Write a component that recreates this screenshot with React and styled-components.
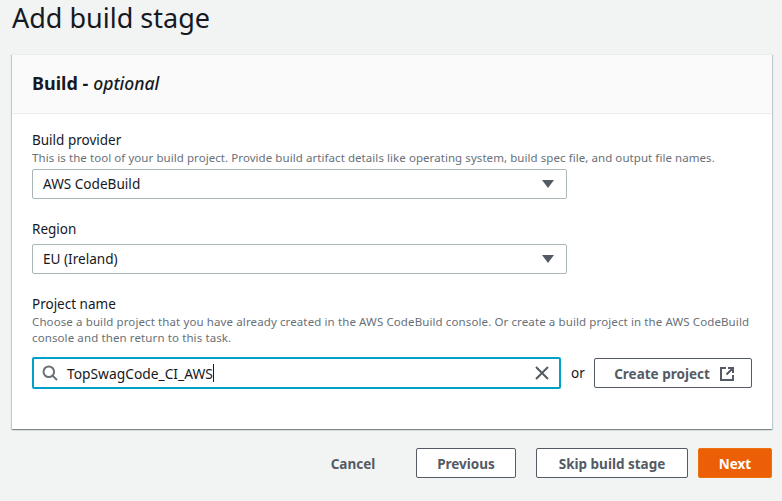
import React from "react";
import styled, { createGlobalStyle } from "styled-components";

const Global = createGlobalStyle`
  html, body { margin: 0; padding: 0; background: #f2f3f3; }
  body { font-family: "Noto Sans", "Open Sans", sans-serif; color: #16191f; }
`;
const Page = styled.div`
  width: 782px; height: 501px; overflow: hidden; box-sizing: border-box;
  padding: 0 10px 0 12px; display: flex; flex-direction: column;
`;
const Title = styled.h1`
  margin: 0; height: 54px; font-size: 27px; line-height: 36px; font-weight: 400; color: #16191f;
`;
const Card = styled.section`
  height: 375px; background: #fff; display: flex; flex-direction: column;
  box-shadow: 0 1px 1px 0 rgba(0,28,36,.3), 1px 1px 1px 0 rgba(0,28,36,.15), -1px 1px 1px 0 rgba(0,28,36,.15);
  border-top: 1px solid #eaeded; box-sizing: border-box;
`;
const CardHeader = styled.header`
  height: 59px; box-sizing: border-box; background: #fafafa; border-bottom: 1px solid #eaeded;
  padding: 0 20px 2px; display: flex; align-items: center;
  font-size: 18px; font-weight: 700; line-height: 24px;
  em { font-weight: 500; font-size: 17.5px; margin-left: 5px; }
`;
const CardBody = styled.div`
  padding: 16px 20px 0; display: flex; flex-direction: column; gap: 20px;
`;
const Field = styled.div` display: flex; flex-direction: column; `;
const Label = styled.label` font-size: 13.5px; line-height: 20px; height: 20px; color: #16191f; `;
const Desc = styled.div`
  font-size: 11.5px; line-height: 16px; color: #687078; margin-bottom: 3px;
  letter-spacing: ${p => p.$track}px;
`;
const Select = styled.div`
  width: 535px; height: 30px; box-sizing: border-box; border: 1px solid #aab7b8; border-radius: 2px;
  margin-top: ${p => (p.$tight ? 0 : 5)}px;
  display: flex; align-items: center; justify-content: space-between;
  padding: 0 12px 1px 10px; font-size: 13.6px; color: #16191f;
`;
const Caret = styled.svg` width: 12px; height: 8px; fill: #545b64; display: block; `;
const SearchRow = styled.div` display: flex; align-items: center; margin-top: 8px; `;
const SearchBox = styled.div`
  width: 529px; height: 32px; flex: none; box-sizing: border-box; border: 2px solid #00a1c9; border-radius: 2px;
  display: flex; align-items: center; padding: 0 9px 0 8px; font-size: 13.8px; color: #16191f;
`;
const SearchText = styled.span` margin-left: 9px; flex: 1; display: flex; align-items: center; `;
const Cursor = styled.span` width: 1px; height: 18px; background: #16191f; `;
const Or = styled.span` margin: 0 9px 0 10px; font-size: 13.5px; width: 14px; `;
const Button = styled.button`
  height: 30px; flex: none; box-sizing: border-box; border-radius: 2px; font-family: inherit; padding: 1px 0 0;
  width: ${p => p.$w}px; font-size: 13.5px; font-weight: 700;
  display: flex; align-items: center; justify-content: center; gap: 9px;
  border: 1px solid ${p => (p.$primary ? "#ec7211" : p.$link ? "transparent" : "#545b64")};
  background: ${p => (p.$primary ? "#ec5f07" : p.$link ? "transparent" : "#fff")};
  color: ${p => (p.$primary ? "#fff" : "#545b64")};
`;
const CreateButton = styled(Button)` padding-left: 3px; `;
const Footer = styled.footer`
  margin-top: 19px; display: flex; justify-content: flex-end; gap: 20px;
`;
const CancelSlot = styled.span` margin-right: 10px; display: flex; `;
const NextSlot = styled.span` margin-left: -10px; display: flex; `;
const Icon = styled.svg`
  width: 16px; height: 16px; fill: none; stroke: ${p => p.$c || "#545b64"}; stroke-width: 2; display: block; flex: none;
`;

const Arrow = () => (
  <Caret viewBox="0 0 12 8"><path d="M0 0h12L6 8z" /></Caret>
);

export default function App() {
  return (
    <Page>
      <Global />
      <Title>Add build stage</Title>
      <Card>
        <CardHeader>Build - <em>optional</em></CardHeader>
        <CardBody>
          <Field>
            <Label>Build provider</Label>
            <Desc $track={0.065}>This is the tool of your build project. Provide build artifact details like operating system, build spec file, and output file names.</Desc>
            <Select $tight>AWS CodeBuild<Arrow /></Select>
          </Field>
          <Field>
            <Label>Region</Label>
            <Select>EU (Ireland)<Arrow /></Select>
          </Field>
          <Field>
            <Label>Project name</Label>
            <Desc $track={0.11}>Choose a build project that you have already created in the AWS CodeBuild console. Or create a build project in the AWS CodeBuild console and then return to this task.</Desc>
            <SearchRow>
              <SearchBox>
                <Icon viewBox="0 0 16 16" $c="#687078"><circle cx="6.8" cy="6.8" r="5.3" /><path d="M10.6 10.6L15 15" /></Icon>
                <SearchText>TopSwagCode_CI_AWS<Cursor /></SearchText>
                <Icon viewBox="0 0 16 16"><path d="M2 2l12 12M14 2L2 14" /></Icon>
              </SearchBox>
              <Or>or</Or>
              <CreateButton $w={158}>
                Create project
                <Icon viewBox="0 0 16 16"><path d="M7 2H2v12h12V9M9 2h5v5M14 2L7.5 8.5" /></Icon>
              </CreateButton>
            </SearchRow>
          </Field>
        </CardBody>
      </Card>
      <Footer>
        <CancelSlot><Button $link $w={66}>Cancel</Button></CancelSlot>
        <Button $w={100}>Previous</Button>
        <Button $w={152}>Skip build stage</Button>
        <NextSlot><Button $primary $w={74}>Next</Button></NextSlot>
      </Footer>
    </Page>
  );
}
